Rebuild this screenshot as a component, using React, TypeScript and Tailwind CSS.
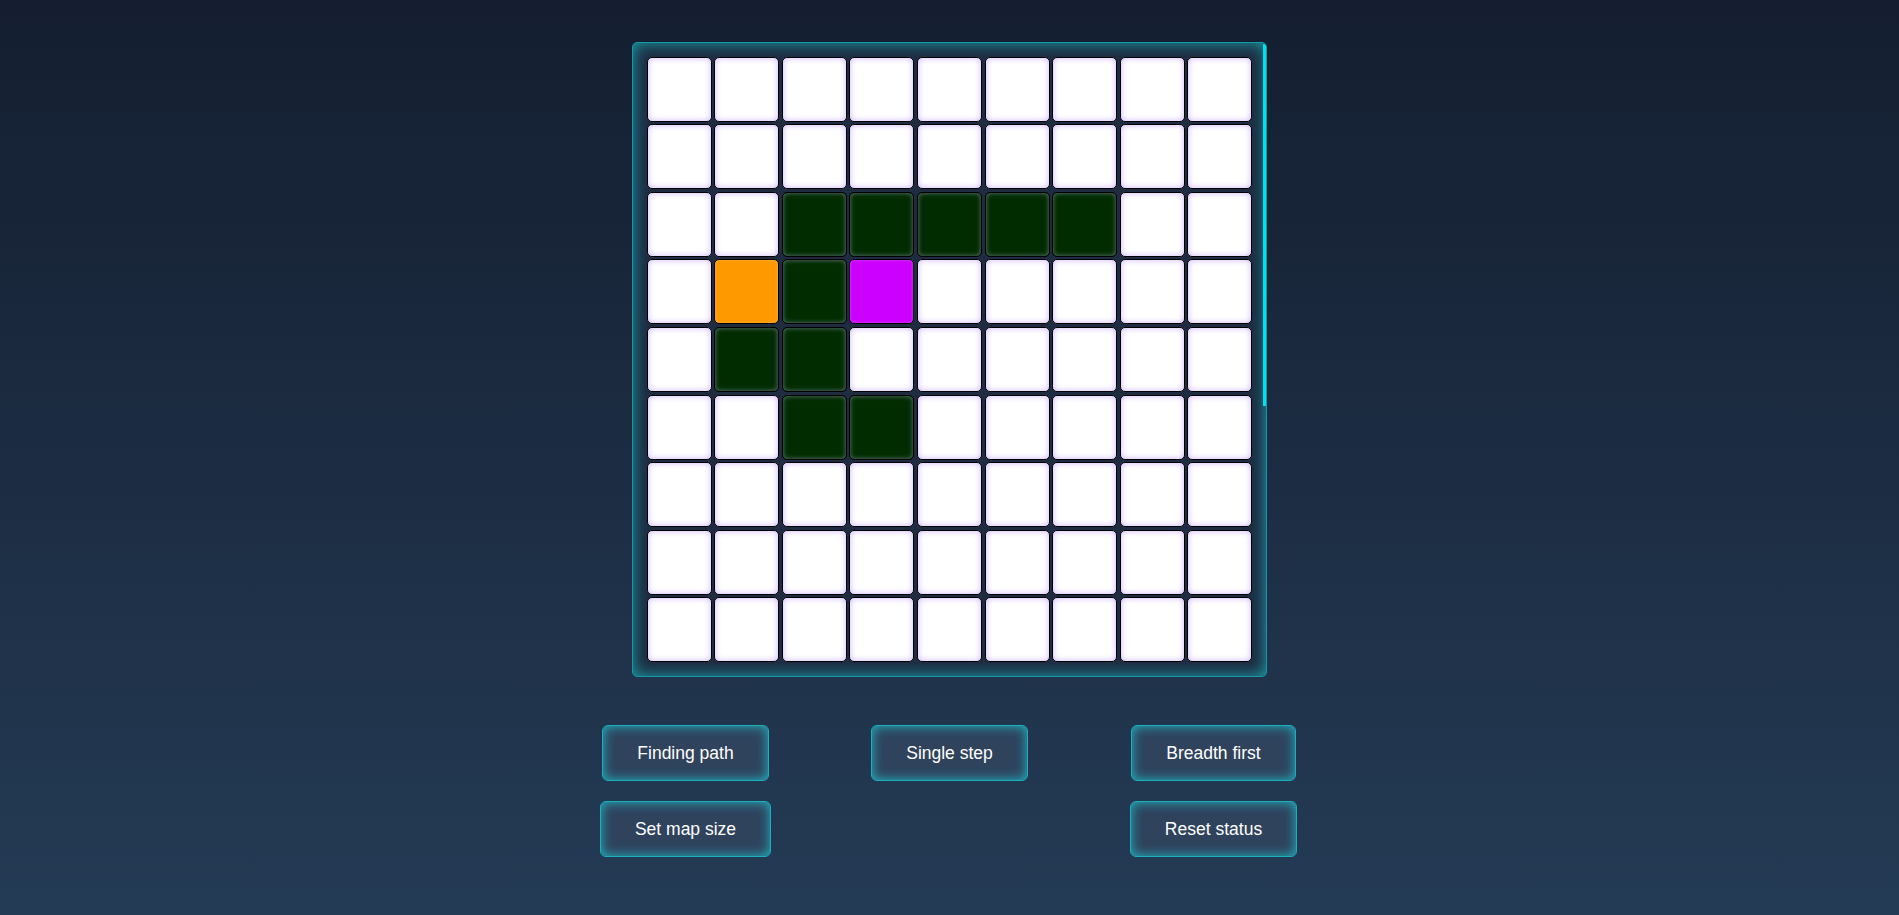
import React from "react";

const W = "wall";
const O = "start";
const P = "end";
const E = "";

const grid: string[][] = [
  [E, E, E, E, E, E, E, E, E],
  [E, E, E, E, E, E, E, E, E],
  [E, E, W, W, W, W, W, E, E],
  [E, O, W, P, E, E, E, E, E],
  [E, W, W, E, E, E, E, E, E],
  [E, E, W, W, E, E, E, E, E],
  [E, E, E, E, E, E, E, E, E],
  [E, E, E, E, E, E, E, E, E],
  [E, E, E, E, E, E, E, E, E],
];

function Cell({ kind }: { kind: string }) {
  let cls =
    "w-[65px] h-[65px] rounded-[5px] border border-black bg-white shadow-[inset_0_0_6px_#cdb2ff]";
  if (kind === W)
    cls =
      "w-[65px] h-[65px] rounded-[5px] border border-black bg-[#002c00] shadow-[inset_0_0_5px_#66777a]";
  if (kind === O)
    cls =
      "w-[65px] h-[65px] rounded-[5px] border border-black bg-[#ff9900] shadow-[inset_0_0_3px_#ffb040]";
  if (kind === P)
    cls =
      "w-[65px] h-[65px] rounded-[5px] border border-black bg-[#cc00ff] shadow-[inset_0_0_3px_#d84cff]";
  return <div className={cls} />;
}

function Btn({ label }: { label: string }) {
  return (
    <button className="h-[56px] px-[34px] rounded-[6px] bg-[#2f435d] text-white text-[17.5px] shadow-[inset_0_0_12px_#1fb8c6] border border-[#1bb0be] font-['Liberation_Sans',Arial,sans-serif]">
      {label}
    </button>
  );
}

export default function App() {
  return (
    <div className="w-full min-h-[915px] bg-gradient-to-b from-[#141e30] to-[#243b55] font-['Liberation_Sans',Arial,sans-serif] flex flex-col items-center pt-[42px]">
      <div className="relative w-[635px] h-[635px] rounded-[5px] bg-[#1e2b40] border border-[#139aa4] shadow-[inset_0_0_16px_#1aa4ae] flex items-center justify-center">
        <div className="grid grid-cols-[repeat(9,65px)] gap-[2.6px]">
          {grid.flat().map((k, i) => (
            <Cell key={i} kind={k} />
          ))}
        </div>
        <div className="absolute right-[0px] top-[1px] w-[3px] h-[362px] bg-[#00e1f0] rounded-tr-[4px]" />
      </div>
      <div className="mt-[48px] grid grid-cols-[repeat(3,264px)] gap-y-[20px] justify-items-center">
        <Btn label="Finding path" />
        <Btn label="Single step" />
        <Btn label="Breadth first" />
        <Btn label="Set map size" />
        <div />
        <Btn label="Reset status" />
      </div>
    </div>
  );
}
